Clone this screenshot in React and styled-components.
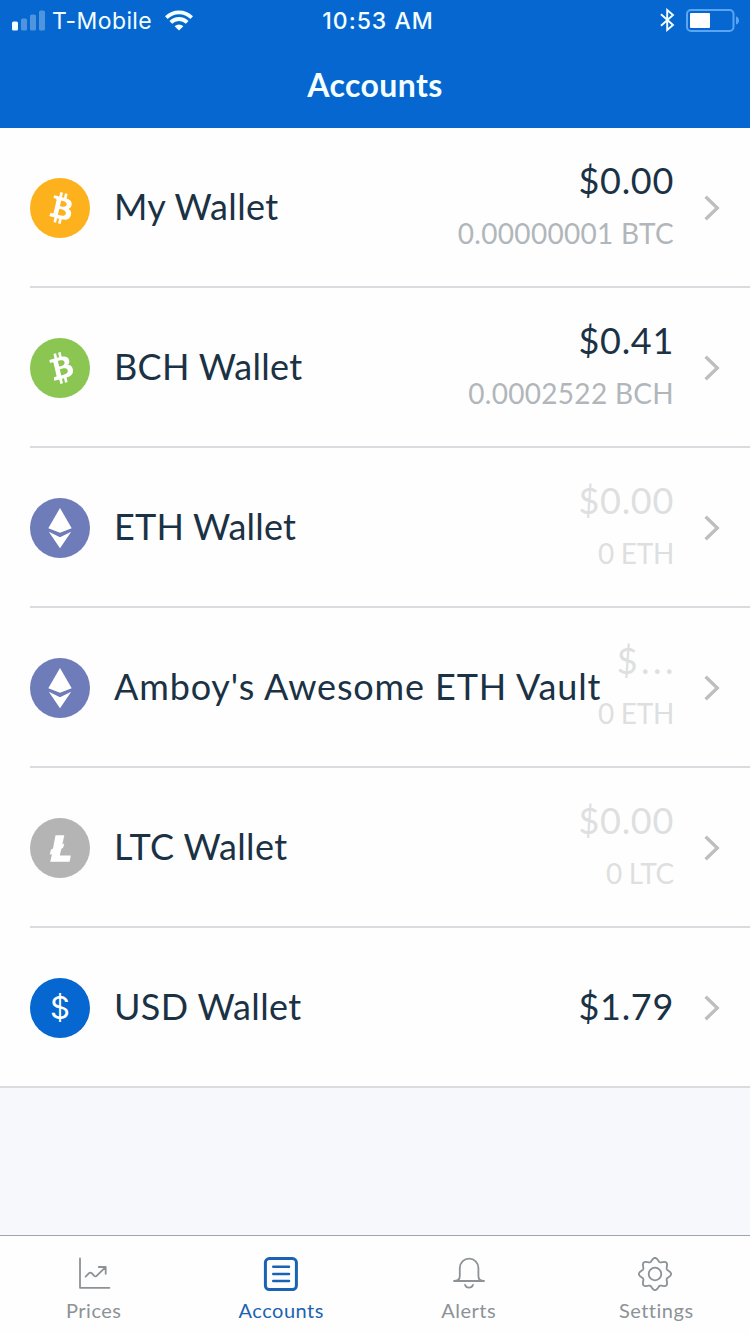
import React, { useState } from "react";
import styled, { createGlobalStyle } from "styled-components";

const colors = {
  primary: "#0667d0",
  active: "#1a63b2",
  text: "#1b3245",
  muted: "#b1b6bb",
  empty: "#dedfe0",
  line: "#dadbde",
  background: "#f7f8fc",
  tab: "#8d9296",
};

const GlobalStyle = createGlobalStyle`
  body {
    margin: 0;
    background-color: ${colors.background};
    font-family: Lato, "Liberation Sans", sans-serif;
  }
`;

const Screen = styled.div`
  display: flex;
  flex-direction: column;
  width: 750px;
  height: 1334px;
  overflow: hidden;
`;

// Header

const Header = styled.header`
  flex: none;
  height: 128px;
  color: #f4ffff;
  background-color: ${colors.primary};
`;

const StatusBar = styled.div`
  display: grid;
  grid-template-columns: 1fr auto 1fr;
  align-items: center;
  height: 40px;
  padding: 0 11px 0 12px;
  box-sizing: border-box;
  font-family: Inter, "Liberation Sans", sans-serif;
  font-size: 23px;
  line-height: 38px;
`;

const StatusGroup = styled.div`
  display: flex;
  align-items: center;
  justify-content: ${(props) => (props.$end ? "flex-end" : "flex-start")};
`;

const Carrier = styled.span`
  margin: 0 13px 0 7px;
  padding-top: 2px;
  letter-spacing: 0.4px;
`;

const Clock = styled.span`
  padding: 2px 0 0 5px;
  font-weight: 500;
  letter-spacing: 1px;
`;

const Battery = styled.svg`
  margin-left: 11px;
`;

const Title = styled.h1`
  margin: 0;
  font-size: 32px;
  font-weight: 700;
  line-height: 90px;
  text-align: center;
  letter-spacing: 0.4px;
`;

// Wallet list

const List = styled.ul`
  flex: none;
  margin: 0;
  padding: 0;
  list-style-type: none;
  background-color: #fefefe;
  border-bottom: 2px solid ${colors.line};
`;

const Row = styled.li`
  display: flex;
  align-items: center;
  height: 160px;
  margin-left: 30px;
  padding: 2px 30px 0 0;
  box-sizing: border-box;
  border-bottom: 2px solid ${colors.line};
  cursor: pointer;

  &:last-child {
    height: 158px;
    border-bottom: none;
  }
`;

const Coin = styled.span`
  display: flex;
  flex: none;
  align-items: center;
  justify-content: center;
  width: 60px;
  height: 60px;
  border-radius: 50%;
  color: #fff;
  background-color: ${(props) => props.$color};
`;

const Dollar = styled.span`
  font-family: Inter, "Liberation Sans", sans-serif;
  font-size: 31px;
  line-height: 60px;
`;

const Name = styled.span`
  flex: 1;
  min-width: 0;
  margin-left: 24px;
  padding-bottom: 4px;
  font-size: 36px;
  line-height: 44px;
  letter-spacing: ${(props) => props.$spacing}px;
  white-space: nowrap;
  color: ${colors.text};
`;

const Balance = styled.div`
  display: flex;
  flex-direction: column;
  align-items: flex-end;
  margin-right: 30px;
  padding-bottom: ${(props) => (props.$single ? 4 : 7)}px;
  white-space: nowrap;
`;

const Amount = styled.span`
  font-size: 36px;
  line-height: 44px;
  letter-spacing: ${(props) => (props.$cut ? 3.5 : 0.7)}px;
  margin-right: ${(props) => (props.$cut ? -3 : 0)}px;
  color: ${(props) => (props.$empty ? colors.empty : colors.text)};
`;

const Units = styled.span`
  margin-top: 12px;
  font-size: 28px;
  line-height: 38px;
  letter-spacing: ${(props) => (props.$empty ? -0.3 : 0.3)}px;
  color: ${(props) => (props.$empty ? colors.empty : colors.muted)};
`;

const Filler = styled.div`
  flex: 1;
`;

// Tab bar

const TabBar = styled.nav`
  display: grid;
  flex: none;
  grid-template-columns: repeat(4, 1fr);
  height: 99px;
  box-sizing: border-box;
  border-top: 1px solid #a2a4ac;
  background-color: #fefefe;
`;

const Tab = styled.button`
  display: flex;
  flex-direction: column;
  align-items: center;
  padding: 20px 0 0;
  border: none;
  background: none;
  color: ${(props) => (props.$active ? colors.active : colors.tab)};
  font-family: inherit;
  font-size: 20px;
  line-height: 26px;
  letter-spacing: 0.5px;
  cursor: pointer;
`;

const TabLabel = styled.span`
  margin-top: 5px;
`;

// Icons

const BitcoinIcon = ({ rotate = 0 }) => (
  <svg width="60" height="60" viewBox="0 0 60 60" fill="currentColor">
    <g transform={`translate(30.7 30) scale(0.93 1) rotate(${rotate}) scale(1.6) translate(-15.8 -16)`}>
      <path d="M23.189 14.02c.314-2.096-1.283-3.223-3.465-3.975l.708-2.84-1.728-.43-.69 2.765c-.454-.114-.92-.22-1.385-.326l.695-2.783L15.596 6l-.708 2.839c-.376-.086-.746-.17-1.104-.26l.002-.009-2.384-.595-.46 1.846s1.283.294 1.256.312c.7.175.826.638.805 1.006l-.806 3.235c.048.012.11.03.18.057l-.183-.045-1.13 4.532c-.086.212-.303.531-.793.41.018.025-1.256-.313-1.256-.313l-.858 1.978 2.25.561c.418.105.828.215 1.231.318l-.715 2.872 1.727.43.708-2.84c.472.127.93.245 1.378.357l-.706 2.828 1.728.43.715-2.866c2.948.558 5.164.333 6.097-2.333.752-2.146-.037-3.385-1.588-4.192 1.13-.26 1.98-1.003 2.207-2.538zm-3.95 5.538c-.533 2.147-4.148.986-5.32.695l.95-3.805c1.172.293 4.929.872 4.37 3.11zm.535-5.569c-.487 1.953-3.495.96-4.47.717l.86-3.45c.975.243 4.118.696 3.61 2.733z" />
    </g>
  </svg>
);

const EtherIcon = () => (
  <svg width="60" height="60" viewBox="0 0 60 60" fill="currentColor">
    <path d="M30 10 41.7 30.2 30 34.8 18.3 30.2Z" />
    <path d="M18.8 33.8 30 39.2 41.2 33.8 30 50.3Z" />
  </svg>
);

const LitecoinIcon = () => (
  <svg width="60" height="60" viewBox="0 0 60 60" fill="currentColor">
    <path d="M25.5 17.2H34.3L32.4 26.2 34.3 25.6 33.2 29.6 31.3 31 29.8 37.4H40.8L39.6 43.8H20.2L22 36.2 19.8 36.6 20.9 31.8 23 30.4Z" />
  </svg>
);

const Chevron = () => (
  <svg width="16" height="26" viewBox="0 0 16 26" fill="none" stroke="#bdbebf" strokeWidth="3.3">
    <path d="M1.6 1.8 13.3 13 1.6 24.2" />
  </svg>
);

const SignalIcon = () => (
  <svg width="33" height="21" viewBox="0 0 33 21" fill="currentColor">
    <rect x="0" y="11.5" width="6" height="9" rx="1.6" />
    <g opacity="0.3">
      <rect x="9" y="8.5" width="6" height="12" rx="1.6" />
      <rect x="18" y="4.5" width="6" height="16" rx="1.6" />
      <rect x="27" y="0.5" width="6" height="20" rx="1.6" />
    </g>
  </svg>
);

const WifiIcon = () => (
  <svg width="28" height="21" viewBox="0 0 28 21" fill="none" stroke="currentColor" strokeWidth="3.8">
    <path d="M1.3 7.6A18 18 0 0 1 26.7 7.6" />
    <path d="M5.8 12.4A11.6 11.6 0 0 1 22.2 12.4" />
    <path d="M14 20.6 9.6 16.3A6.2 6.2 0 0 1 18.4 16.3Z" fill="currentColor" stroke="none" />
  </svg>
);

const BluetoothIcon = () => (
  <svg width="15" height="24" viewBox="0 0 15 24" fill="none" stroke="currentColor" strokeWidth="1.9">
    <path d="M1 6.2 13 17 7.2 22V2L13 7 1 17.8" />
  </svg>
);

const BatteryIcon = () => (
  <Battery width="53" height="23" viewBox="0 0 53 23">
    <rect x="1" y="1" width="46.5" height="21" rx="4" fill="none" stroke="#5aa6f5" strokeWidth="2" />
    <rect x="4" y="4" width="20" height="15" rx="1" fill="#fff" />
    <path d="M50 7.5C54 8.5 54 14.5 50 15.5Z" fill="#5aa6f5" />
  </Battery>
);

const TabIcon = ({ children }) => (
  <svg
    width="36"
    height="36"
    viewBox="0 0 36 36"
    fill="none"
    stroke="currentColor"
    strokeWidth="1.8"
    strokeLinecap="round"
    strokeLinejoin="round"
  >
    {children}
  </svg>
);

const PricesIcon = () => (
  <TabIcon>
    <path d="M4 2.5V31.8H33.4" />
    <path d="M9.6 20.6 13 17.2Q14.3 16 15.7 17.2L18.2 19.9Q19.4 21 20.6 19.8L29.4 11.3M22.8 11H29.7V17.8" />
  </TabIcon>
);

const AccountsIcon = () => (
  <TabIcon>
    <rect x="2.4" y="2.6" width="31" height="31" rx="4" strokeWidth="3" />
    <path d="M10.3 10.8H26M10.3 18H26M10.3 25H26" strokeWidth="2.6" />
  </TabIcon>
);

const BellIcon = () => (
  <TabIcon>
    <path d="M3 25H33M3 25Q8.8 25 8.8 20V12A9.3 9.3 0 0 1 27.4 12V20Q27.4 25 33 25" />
    <path d="M14 28.8A4.2 4.2 0 0 0 22 28.8" />
  </TabIcon>
);

// The outline goes round the centre in eight rounded teeth
const gearPath = () => {
  const points = [];
  for (let i = 0; i < 160; i++) {
    const angle = (i / 160) * Math.PI * 2;
    const radius = 14.4 + 1.7 * Math.cos(8 * angle);
    const x = 17 + radius * Math.cos(angle);
    const y = 18 + radius * Math.sin(angle);
    points.push(`${x.toFixed(2)} ${y.toFixed(2)}`);
  }
  return `M${points.join("L")}Z`;
};

const SettingsIcon = () => (
  <TabIcon>
    <path d={gearPath()} />
    <circle cx="17" cy="18" r="6.3" />
  </TabIcon>
);

const wallets = [
  { name: "My Wallet", color: "#fdb11c", icon: <BitcoinIcon />, amount: "$0.00", units: "0.00000001 BTC", spacing: 0.35 },
  { name: "BCH Wallet", color: "#8bc552", icon: <BitcoinIcon rotate={-28} />, amount: "$0.41", units: "0.0002522 BCH", spacing: 0.3 },
  { name: "ETH Wallet", color: "#6f7cba", icon: <EtherIcon />, amount: "$0.00", units: "0 ETH", empty: true, spacing: 0.2 },
  { name: "Amboy's Awesome ETH Vault", color: "#6f7cba", icon: <EtherIcon />, amount: "$...", units: "0 ETH", empty: true, cut: true, spacing: 0.86 },
  { name: "LTC Wallet", color: "#b4b4b4", icon: <LitecoinIcon />, amount: "$0.00", units: "0 LTC", empty: true, spacing: 0.35 },
  { name: "USD Wallet", color: "#0667d0", icon: <Dollar>$</Dollar>, amount: "$1.79", spacing: 0.35 },
];

const tabs = [
  { name: "Prices", icon: <PricesIcon /> },
  { name: "Accounts", icon: <AccountsIcon /> },
  { name: "Alerts", icon: <BellIcon /> },
  { name: "Settings", icon: <SettingsIcon /> },
];

function App() {
  const [page, setPage] = useState("Accounts");

  return (
    <Screen>
      <GlobalStyle />
      <Header>
        <StatusBar>
          <StatusGroup>
            <SignalIcon />
            <Carrier>T-Mobile</Carrier>
            <WifiIcon />
          </StatusGroup>
          <Clock>10:53 AM</Clock>
          <StatusGroup $end>
            <BluetoothIcon />
            <BatteryIcon />
          </StatusGroup>
        </StatusBar>
        <Title>Accounts</Title>
      </Header>
      <List>
        {wallets.map((wallet) => (
          <Row key={wallet.name}>
            <Coin $color={wallet.color}>{wallet.icon}</Coin>
            <Name $spacing={wallet.spacing}>{wallet.name}</Name>
            <Balance $single={!wallet.units}>
              <Amount $empty={wallet.empty} $cut={wallet.cut}>
                {wallet.amount}
              </Amount>
              {wallet.units && <Units $empty={wallet.empty}>{wallet.units}</Units>}
            </Balance>
            <Chevron />
          </Row>
        ))}
      </List>
      <Filler />
      <TabBar>
        {tabs.map((tab) => (
          <Tab key={tab.name} $active={tab.name === page} onClick={() => setPage(tab.name)}>
            {tab.icon}
            <TabLabel>{tab.name}</TabLabel>
          </Tab>
        ))}
      </TabBar>
    </Screen>
  );
}

export default App;
